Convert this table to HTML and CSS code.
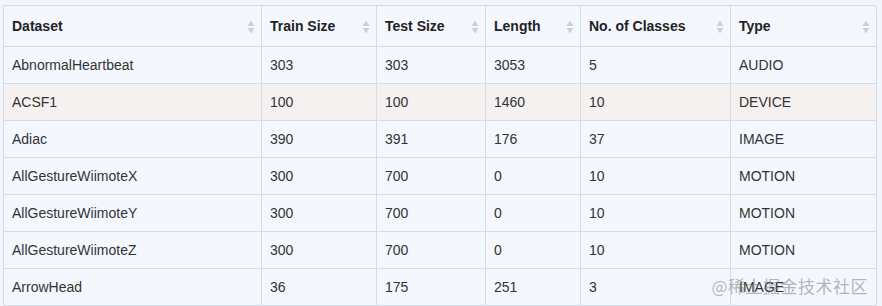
FILE: index.html
```html
<!DOCTYPE html>
<html>
<head>
<meta charset="utf-8">
<link rel="stylesheet" href="styles.css">
</head>
<body>
<div class="wrap">
<table class="grid">
<colgroup>
<col class="c1"><col class="c2"><col class="c3"><col class="c4"><col class="c5"><col class="c6">
</colgroup>
<thead>
<tr>
<th><div class="th"><span>Dataset</span><svg class="sort" viewBox="0 0 8 14"><path d="M4 0.5 L7.5 6 L0.5 6 Z"/><path d="M4 13.5 L7.5 8 L0.5 8 Z"/></svg></div></th>
<th><div class="th"><span>Train Size</span><svg class="sort" viewBox="0 0 8 14"><path d="M4 0.5 L7.5 6 L0.5 6 Z"/><path d="M4 13.5 L7.5 8 L0.5 8 Z"/></svg></div></th>
<th><div class="th"><span>Test Size</span><svg class="sort" viewBox="0 0 8 14"><path d="M4 0.5 L7.5 6 L0.5 6 Z"/><path d="M4 13.5 L7.5 8 L0.5 8 Z"/></svg></div></th>
<th><div class="th"><span>Length</span><svg class="sort" viewBox="0 0 8 14"><path d="M4 0.5 L7.5 6 L0.5 6 Z"/><path d="M4 13.5 L7.5 8 L0.5 8 Z"/></svg></div></th>
<th><div class="th"><span>No. of Classes</span><svg class="sort" viewBox="0 0 8 14"><path d="M4 0.5 L7.5 6 L0.5 6 Z"/><path d="M4 13.5 L7.5 8 L0.5 8 Z"/></svg></div></th>
<th><div class="th"><span>Type</span><svg class="sort" viewBox="0 0 8 14"><path d="M4 0.5 L7.5 6 L0.5 6 Z"/><path d="M4 13.5 L7.5 8 L0.5 8 Z"/></svg></div></th>
</tr>
</thead>
<tbody>
<tr><td>AbnormalHeartbeat</td><td>303</td><td>303</td><td>3053</td><td>5</td><td>AUDIO</td></tr>
<tr class="hover"><td>ACSF1</td><td>100</td><td>100</td><td>1460</td><td>10</td><td>DEVICE</td></tr>
<tr><td>Adiac</td><td>390</td><td>391</td><td>176</td><td>37</td><td>IMAGE</td></tr>
<tr><td>AllGestureWiimoteX</td><td>300</td><td>700</td><td>0</td><td>10</td><td>MOTION</td></tr>
<tr><td>AllGestureWiimoteY</td><td>300</td><td>700</td><td>0</td><td>10</td><td>MOTION</td></tr>
<tr><td>AllGestureWiimoteZ</td><td>300</td><td>700</td><td>0</td><td>10</td><td>MOTION</td></tr>
<tr><td>ArrowHead</td><td>36</td><td>175</td><td>251</td><td>3</td><td>IMAGE</td></tr>
</tbody>
</table>
<div class="watermark">@稀土掘金技术社区</div>
</div>
</body>
</html>
```
FILE: styles.css
```css
html, body {
  margin: 0;
  padding: 0;
  background: #f2f6fc;
}
body {
  padding: 5px 6px 0 3px;
  font-family: "Liberation Sans", Arial, sans-serif;
  font-size: 14px;
  color: #333;
}
.wrap {
  position: relative;
  width: 873px;
}
.grid {
  width: 873px;
  table-layout: fixed;
  border-collapse: separate;
  border-spacing: 0;
  border-top: 1px solid #d5dce6;
  border-left: 1px solid #d5dce6;
  border-top-right-radius: 4px;
  background: #f4f8fe;
}
.c1 { width: 258px; }
.c2 { width: 115px; }
.c3 { width: 109px; }
.c4 { width: 95px; }
.c5 { width: 150px; }
.c6 { width: 146px; }
th, td {
  border-right: 1px solid #d5dce6;
  border-bottom: 1px solid #d5dce6;
  padding: 0 8px;
  text-align: left;
  white-space: nowrap;
}
tr:first-child th:last-child {
  border-top-right-radius: 4px;
}
th {
  height: 40px;
  font-weight: bold;
  color: #222;
  padding-right: 6px;
}
td {
  height: 36px;
  color: #333;
}
.th {
  display: flex;
  align-items: center;
  justify-content: space-between;
}
.sort {
  width: 8px;
  height: 14px;
  fill: #cdd1d7;
  flex: none;
  margin-top: 1px;
}
.hover td {
  background: #f6f1f1;
}
.watermark {
  position: absolute;
  right: 8px;
  bottom: 8px;
  font-family: "Noto Sans CJK SC", sans-serif;
  font-size: 17px;
  color: rgba(120, 120, 120, 0.55);
  letter-spacing: 0.5px;
  pointer-events: none;
}
```
